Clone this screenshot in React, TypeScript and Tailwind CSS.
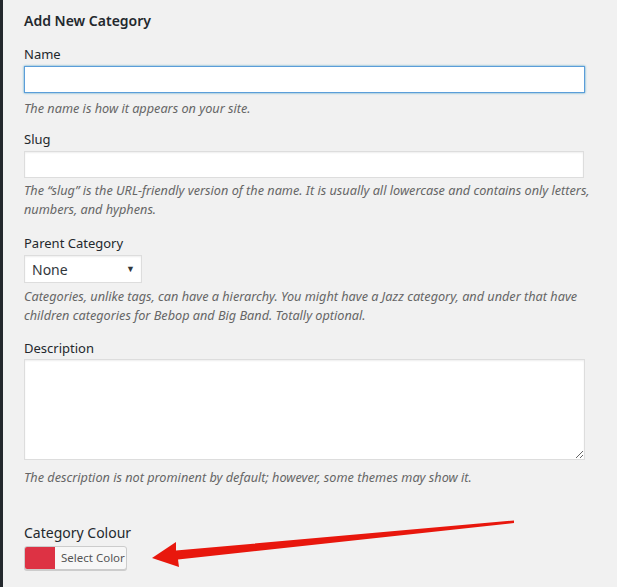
const font = { fontFamily: '"Noto Sans", "Open Sans", sans-serif' }

const Label = ({ children, className = '' }: { children: React.ReactNode; className?: string }) => (
  <label className={`block text-[13px] leading-[20px] text-[#23282d] ${className}`}>{children}</label>
)

const Hint = ({ children, className = '' }: { children: React.ReactNode; className?: string }) => (
  <p className={`whitespace-nowrap text-[12.7px] italic leading-[19px] text-[#666] ${className}`}>{children}</p>
)

const Arrow = () => (
  <svg className="absolute left-0 top-0 pointer-events-none" width={617} height={587}>
    <polygon
      points="152,558 176,542 176,550.5 514,520.5 514,523 178,559.5 179,567"
      fill="#e8170d"
    />
  </svg>
)

const App = () => {
  return (
    <div className="relative flex w-[617px] h-[587px] overflow-hidden bg-[#f1f1f1]" style={font}>
      <div className="w-[3px] shrink-0 bg-[#23282d]" />

      <div className="flex flex-col pl-[21px] w-[585px]">
        <h2 className="mt-[11px] text-[14px] font-semibold leading-[20px] text-[#23282d]">
          Add New Category
        </h2>

        <Label className="mt-[13px]">Name</Label>
        <input
          type="text"
          className="mt-[2px] h-[27px] w-[561px] border border-[#5b9dd9] bg-white outline-none shadow-[0_0_2px_rgba(30,140,190,0.8)]"
        />
        <Hint className="mt-[5px] leading-[20px]">The name is how it appears on your site.</Hint>

        <Label className="mt-[11px]">Slug</Label>
        <input
          type="text"
          className="mt-[2px] h-[27px] w-[560px] border border-[#ddd] bg-white outline-none shadow-[inset_0_1px_2px_rgba(0,0,0,0.07)]"
        />
        <Hint className="mt-[3px]">
          The “slug” is the URL-friendly version of the name. It is usually all lowercase and contains only letters,
          <br />
          numbers, and hyphens.
        </Hint>

        <Label className="mt-[14px]">Parent Category</Label>
        <div className="mt-[2px] flex h-[28px] w-[118px] items-center justify-between border border-[#ddd] bg-white pl-[7px] pr-[6px] shadow-[inset_0_1px_2px_rgba(0,0,0,0.07)]">
          <span className="text-[14px] text-[#32373c]">None</span>
          <span className="text-[9px] text-[#32373c]">▼</span>
        </div>
        <Hint className="mt-[4px]">
          Categories, unlike tags, can have a hierarchy. You might have a Jazz category, and under that have
          <br />
          children categories for Bebop and Big Band. Totally optional.
        </Hint>

        <Label className="mt-[13px]">Description</Label>
        <textarea
          className="mt-[1px] h-[101px] w-[561px] resize border border-[#ddd] bg-white outline-none shadow-[inset_0_1px_2px_rgba(0,0,0,0.07)]"
        />
        <Hint className="mt-[7px] leading-[20px]">
          The description is not prominent by default; however, some themes may show it.
        </Hint>

        <Label className="mt-[36px] text-[14px]">Category Colour</Label>
        <button className="mt-[3px] flex h-[24px] w-[103px] items-stretch overflow-hidden rounded-[3px] border border-[#ccc] bg-[#f7f7f7] shadow-[0_1px_0_#ccc]">
          <span className="w-[30px] bg-[#dd3244]" />
          <span className="flex items-center pl-[6px] text-[11.5px] text-[#555]">Select Color</span>
        </button>
      </div>

      <Arrow />
    </div>
  )
}

export default App
